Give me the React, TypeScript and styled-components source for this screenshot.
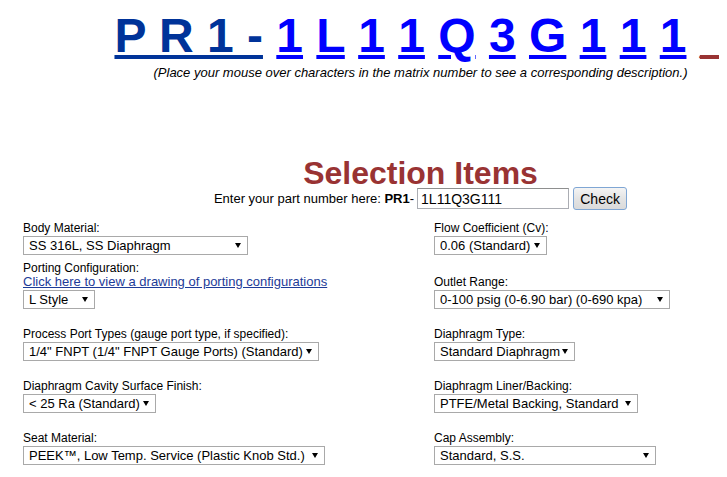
import React from "react";
import styled, { createGlobalStyle } from "styled-components";

const Global = createGlobalStyle`
  html, body { overflow: hidden; }
  body {
    margin: 8px;
    background: #fff;
    color: #000;
    font-family: "Liberation Sans", Arial, sans-serif;
  }
`;

const Page = styled.div`
  width: 825px;
`;

const Matrix = styled.div`
  text-align: center;
  white-space: nowrap;
  font-size: 48px;
  font-weight: bold;
  line-height: 55px;
`;

const MainLink = styled.a`
  color: #003399;
  text-decoration: underline;
`;

const CharLink = styled.a<{ $tone?: "blue" | "brown" }>`
  color: ${(p) => (p.$tone === "brown" ? "#993333" : "#0000ff")};
  text-decoration: underline;
  cursor: pointer;
`;

const Hint = styled.div`
  margin-top: 2px;
  text-align: center;
  font-size: 13px;
  line-height: 15px;
  font-style: italic;
`;

const Heading = styled.h2`
  margin: 79px 0 0;
  text-align: center;
  font-size: 32px;
  line-height: 29px;
  font-weight: bold;
  color: #993333;
`;

const EnterRow = styled.div`
  margin-top: -1px;
  display: flex;
  justify-content: center;
  align-items: center;
  height: 23px;
  font-size: 13px;
  line-height: 15px;
`;

const PartInput = styled.input`
  box-sizing: border-box;
  width: 152px;
  height: 21px;
  margin: 0 0 0 3px;
  padding: 0 3px;
  border: 1px solid #abadb3;
  border-top-color: #8e8f8f;
  font-family: "Liberation Sans", Arial, sans-serif;
  font-size: 14px;
  color: #000;
  outline: none;
`;

const CheckButton = styled.button`
  box-sizing: border-box;
  width: 54px;
  height: 23px;
  margin: 0 0 0 4px;
  padding: 0;
  border: 1px solid #7fa6d4;
  border-radius: 3px;
  background: linear-gradient(#f4f4f4, #e4e4e4 50%, #dadada);
  font-family: "Liberation Sans", Arial, sans-serif;
  font-size: 14px;
  color: #000;
`;

const Grid = styled.div`
  margin-top: 11px;
  padding-left: 15px;
  display: grid;
  grid-template-columns: 411px 1fr;
  row-gap: 18px;
`;

const Cell = styled.div`
  display: flex;
  flex-direction: column;
  align-items: flex-start;
`;

const Label = styled.div<{ $gap?: number }>`
  font-size: 12px;
  line-height: 14px;
  margin-top: ${(p) => p.$gap ?? 0}px;
`;

const DrawingLink = styled.a`
  font-size: 13px;
  line-height: 14px;
  color: #1d3b98;
  text-decoration: underline;
  cursor: pointer;
`;

const SelectWrap = styled.span<{ $w: number }>`
  position: relative;
  display: block;
  width: ${(p) => p.$w}px;
  height: 19px;
  margin-top: 1px;
  &::after {
    content: "";
    position: absolute;
    right: 7px;
    top: 7px;
    border-left: 3px solid transparent;
    border-right: 3px solid transparent;
    border-top: 5px solid #000;
    pointer-events: none;
  }
`;

const Select = styled.select`
  appearance: none;
  -webkit-appearance: none;
  box-sizing: border-box;
  display: block;
  width: 100%;
  height: 100%;
  margin: 0;
  padding: 0 14px 0 5px;
  border: 1px solid #a9a9a9;
  border-radius: 0;
  background: #fff;
  color: #000;
  font-family: "Liberation Sans", Arial, sans-serif;
  font-size: 13px;
  line-height: 17px;
  outline: none;
`;

type FieldProps = { label: string; value: string; width: number; gap?: number };

const Dropdown = ({ value, width }: { value: string; width: number }) => (
  <SelectWrap $w={width}>
    <Select defaultValue={value}>
      <option value={value}>{value}</option>
    </Select>
  </SelectWrap>
);

const Field = ({ label, value, width, gap }: FieldProps) => (
  <>
    <Label $gap={gap}>{label}</Label>
    <Dropdown value={value} width={width} />
  </>
);

const chars = ["1", "L", "1", "1", "Q", "3", "G", "1", "1", "1"];

export default function App() {
  return (
    <Page>
      <Global />
      <Matrix>
        <MainLink>P R 1 -</MainLink>
        {" "}
        {chars.map((c, i) => (
          <React.Fragment key={i}>
            <CharLink>{c}</CharLink>
            {" "}
          </React.Fragment>
        ))}
        <CharLink $tone="brown">_</CharLink>
      </Matrix>
      <Hint>(Place your mouse over characters in the matrix number to see a corresponding description.)</Hint>
      <Heading>Selection Items</Heading>
      <EnterRow>
        <span>
          Enter your part number here: <b>PR1</b>-
        </span>
        <PartInput defaultValue="1L11Q3G111" />
        <CheckButton>Check</CheckButton>
      </EnterRow>
      <Grid>
        <Cell>
          <Field label="Body Material:" value="SS 316L, SS Diaphragm" width={225} />
          <Label $gap={6}>Porting Configuration:</Label>
          <DrawingLink>Click here to view a drawing of porting configurations</DrawingLink>
          <Dropdown value="L Style" width={72} />
        </Cell>
        <Cell>
          <Field label="Flow Coefficient (Cv):" value="0.06 (Standard)" width={113} />
          <Field label="Outlet Range:" value="0-100 psig (0-6.90 bar) (0-690 kpa)" width={236} gap={20} />
        </Cell>
        <Cell>
          <Field label="Process Port Types (gauge port type, if specified):" value={'1/4" FNPT (1/4" FNPT Gauge Ports) (Standard)'} width={296} />
        </Cell>
        <Cell>
          <Field label="Diaphragm Type:" value="Standard Diaphragm" width={141} />
        </Cell>
        <Cell>
          <Field label="Diaphragm Cavity Surface Finish:" value="< 25 Ra (Standard)" width={133} />
        </Cell>
        <Cell>
          <Field label="Diaphragm Liner/Backing:" value="PTFE/Metal Backing, Standard" width={204} />
        </Cell>
        <Cell>
          <Field label="Seat Material:" value="PEEK™, Low Temp. Service (Plastic Knob Std.)" width={302} />
        </Cell>
        <Cell>
          <Field label="Cap Assembly:" value="Standard, S.S." width={222} />
        </Cell>
      </Grid>
    </Page>
  );
}
